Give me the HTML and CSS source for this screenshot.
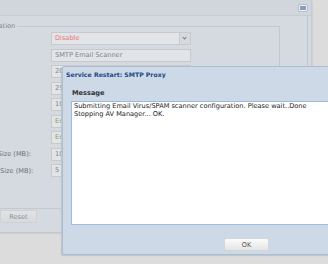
FILE: index.html
```html
<!DOCTYPE html>
<html lang="en">
<head>
    <meta charset="UTF-8">
    <title>SMTP Proxy</title>
    <link rel="stylesheet" href="styles.css">
</head>
<body>
<div class="window">
    <div class="titlebar"><span class="max-btn"></span></div>
    <div class="frame">
        <fieldset class="config">
            <legend>Email Scanner Configuration</legend>
            <div class="row"><label>Status:</label><div class="field select red">Disable<span class="arrow"></span></div></div>
            <div class="row"><label>Name:</label><div class="field">SMTP Email Scanner</div></div>
            <div class="row"><label>Sessions:</label><div class="field">20</div></div>
            <div class="row"><label>Timeout:</label><div class="field">25</div></div>
            <div class="row"><label>Retries:</label><div class="field">10</div></div>
            <div class="row"><label>Virus Scan:</label><div class="field green">Enable</div></div>
            <div class="row"><label>SPAM Scan:</label><div class="field green">Enable</div></div>
            <div class="row"><label>Maximum File Size (MB):</label><div class="field">10</div></div>
            <div class="row"><label>Maximum Mail Size (MB):</label><div class="field">5</div></div>
        </fieldset>
        <div class="actions">
            <button>Save</button>
            <button>Reset</button>
        </div>
    </div>
</div>

<div class="dialog">
    <div class="dialog-title">Service Restart: SMTP Proxy</div>
    <div class="dialog-label">Message</div>
    <div class="message">Submitting Email Virus/SPAM scanner configuration. Please wait..Done<br>Stopping AV Manager... OK.</div>
    <div class="dialog-footer"><button class="ok">OK</button></div>
</div>
</body>
</html>
```

FILE: styles.css
```css
html{
    margin:0px;
    padding:0px;
}
body{
    width:328px;
    height:264px;
    margin:0px;
    padding:0px;
    overflow:hidden;
    position:relative;
    background-color:#dcdcdc;
    font-family:"DejaVu Sans", Verdana, sans-serif;
    font-size:6.6px;
    color:#222;
}
.window{
    width:411px;
    height:232px;
    margin-left:-100px;
    background-color:#d5d9e0;
    border-right:1px solid #c6cad1;
    border-bottom:1px solid #c3c7ce;
    border-radius:0 0 3px 0;
    box-shadow:1px 1px 1px #cfcfcf;
    display:flex;
    flex-direction:column;
}
.titlebar{
    height:15px;
    border-bottom:1px solid #c6cad1;
    background-color:#d1d5dc;
    display:flex;
    justify-content:flex-end;
    align-items:center;
    padding-right:4px;
}
.max-btn{
    width:6px;
    height:4px;
    border:1px solid #eef0f4;
    outline:1px solid #b7c0cf;
    border-radius:1px;
    background-color:#8b9bb8;
}
.frame{
    flex:1;
    margin-right:3px;
    border-right:1px solid #b8c7da;
    display:flex;
    flex-direction:column;
}
.config{
    margin:10px 27px 0 10px;
    padding:0 0 8px 0;
    height:165px;
    border:none;
    border-top:1px solid #c4c8cf;
    border-right:1px solid #c4c8cf;
    display:flex;
    flex-direction:column;
    gap:3.5px;
}
.config legend{
    padding:0 2px;
    margin-left:9px;
    color:#7a8493;
    line-height:1px;
    height:1px;
}
.row{
    display:flex;
    align-items:center;
    height:13px;
    padding-left:40px;
}
.row:first-of-type{
    margin-top:5px;
}
.row label{
    width:101px;
    white-space:nowrap;
    color:#6d7076;
}
.field{
    width:135px;
    height:11px;
    line-height:11px;
    padding-left:3px;
    background-color:#e3e4e7;
    border:1px solid #c8c9cc;
    color:#80838a;
    position:relative;
}
.red{
    color:#e77777;
}
.green{
    color:#73a873;
}
.select .arrow{
    position:absolute;
    top:0;
    right:0;
    width:10px;
    height:11px;
    border-left:1px solid #c8c9cc;
    background-color:#d7d9dc;
}
.select .arrow::after{
    content:"";
    position:absolute;
    left:3px;
    top:3px;
    width:2px;
    height:2px;
    border-right:1px solid #6e7c95;
    border-bottom:1px solid #6e7c95;
    transform:rotate(45deg);
}
.actions{
    margin-top:auto;
    border-top:1px solid #c2c9d4;
    height:22px;
    padding:1px 0 0 52px;
    display:flex;
    gap:11px;
    align-items:flex-start;
}
.actions button{
    width:37px;
    height:13px;
    padding:0;
    font-family:"DejaVu Sans", Verdana, sans-serif;
    font-size:6.6px;
    color:#8a8d92;
    background-image:linear-gradient(#e2e3e6, #d8dadd);
    border:1px solid #cfd1d5;
    border-radius:1px;
}
.dialog{
    position:absolute;
    left:62px;
    top:66px;
    width:367px;
    height:187px;
    background-color:#cdd9e6;
    border:1px solid #aebed2;
    border-radius:2px;
    box-shadow:-1px 1px 1px #bcc2c9;
    display:flex;
    flex-direction:column;
}
.dialog-title{
    padding:4px 0 0 3px;
    height:10px;
    font-weight:bold;
    color:#1c4888;
    font-size:6.2px;
}
.dialog-label{
    margin:8px 0 0 9px;
    height:10px;
    font-weight:bold;
    font-size:6.6px;
    color:#333;
}
.message{
    margin:2px 9px 0 8px;
    height:121px;
    background-color:#ffffff;
    border:1px solid #9ebbdc;
    padding:1px 2px 0 2px;
    line-height:7.5px;
    color:#1a1a1a;
}
.dialog-footer{
    flex:1;
    display:flex;
    justify-content:center;
    align-items:flex-start;
    padding-top:13px;
}
.ok{
    width:45px;
    height:13px;
    padding:0;
    font-family:"DejaVu Sans", Verdana, sans-serif;
    font-size:6.6px;
    color:#555;
    background-image:linear-gradient(#fbfbfb, #e4e4e4);
    border:1px solid #d3d6da;
    border-radius:2px;
}
```
